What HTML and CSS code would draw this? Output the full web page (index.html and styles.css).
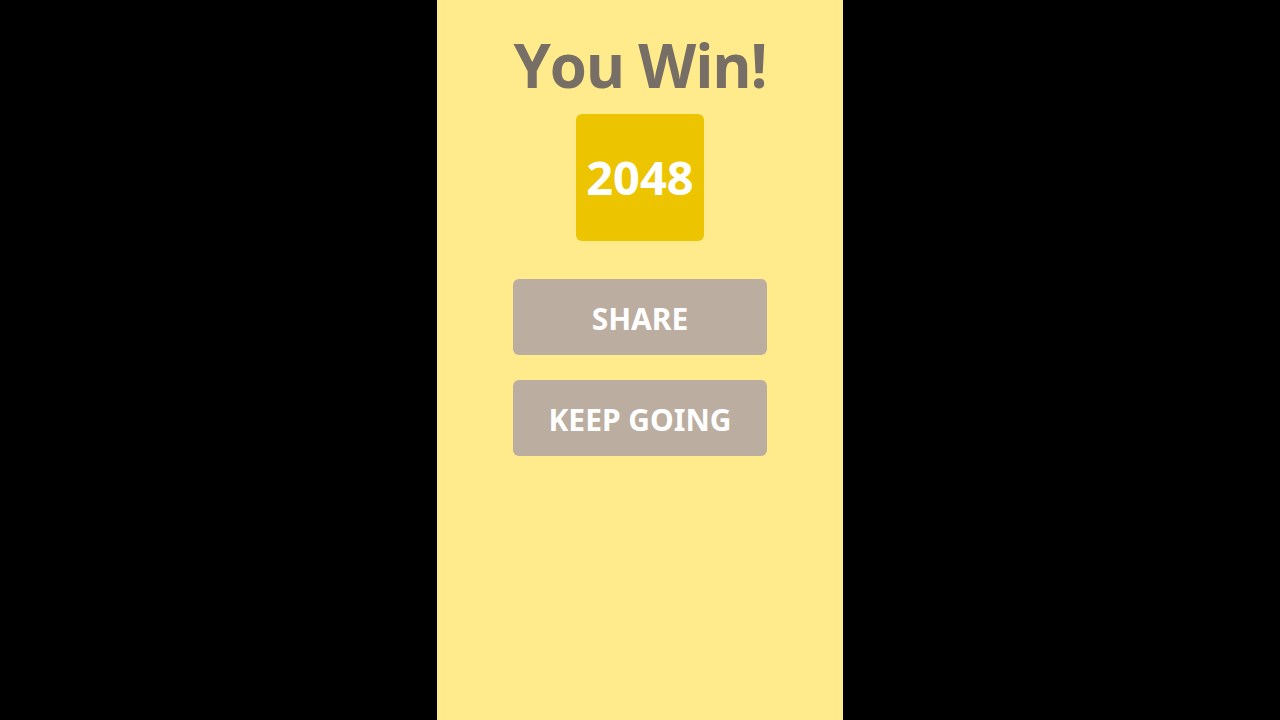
FILE: index.html
```html
<!DOCTYPE html>
<html>
<head>
<meta charset="utf-8">
<link rel="stylesheet" href="styles.css">
</head>
<body>
<div class="panel">
  <h1 class="title">You Win!</h1>
  <div class="tile">2048</div>
  <div class="buttons">
    <div class="btn">SHARE</div>
    <div class="btn">KEEP GOING</div>
  </div>
</div>
</body>
</html>
```
FILE: styles.css
```css
html, body {
  margin: 0;
  padding: 0;
  background: #000;
  height: 100%;
}
body {
  display: flex;
  justify-content: center;
  font-family: "Open Sans", "Noto Sans", sans-serif;
}
.panel {
  width: 406px;
  height: 720px;
  background: #ffeb8c;
  display: flex;
  flex-direction: column;
  align-items: center;
}
.title {
  margin: 25px 0 0;
  font-size: 60px;
  letter-spacing: -1.2px;
  font-weight: 700;
  color: #776e65;
  line-height: 80px;
  height: 80px;
}
.tile {
  margin-top: 9px;
  width: 128px;
  height: 127px;
  border-radius: 6px;
  background: #ecc400;
  color: #fff;
  font-size: 47px;
  font-weight: 700;
  display: flex;
  align-items: center;
  justify-content: center;
  line-height: 1;
}
.buttons {
  margin-top: 38px;
  display: flex;
  flex-direction: column;
  gap: 25px;
}
.btn {
  width: 254px;
  height: 76px;
  border-radius: 6px;
  background: #bbada0;
  color: #fff;
  font-family: "Noto Sans", "Open Sans", sans-serif;
  font-size: 30px;
  font-weight: 700;
  display: flex;
  align-items: center;
  justify-content: center;
  padding-top: 2px;
  box-sizing: border-box;
}
```
